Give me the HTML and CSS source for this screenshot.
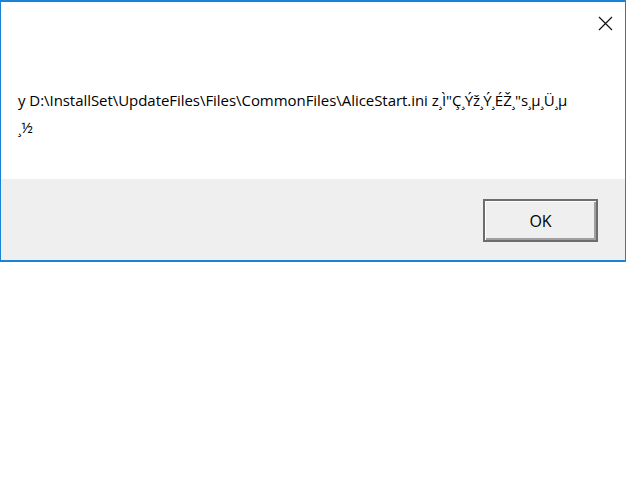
FILE: index.html
```html
<!DOCTYPE html>
<html>
<head>
<meta charset="utf-8">
<link rel="stylesheet" href="styles.css">
</head>
<body>
<div class="dialog">
  <div class="main">
    <div class="titlebar">
      <span class="close" aria-label="Close">
        <svg width="15" height="15" viewBox="0 0 15 15"><path d="M1 1 L14 14 M14 1 L1 14" stroke="#111" stroke-width="1.2" fill="none"/></svg>
      </span>
    </div>
    <p class="message">y D:\InstallSet\UpdateFiles\Files\CommonFiles\AliceStart.ini z¸Ì"Ç¸Ýž¸Ý¸ÉŽ¸"s¸µ¸Ü¸µ ¸½</p>
  </div>
  <div class="footer">
    <button class="ok">OK</button>
  </div>
</div>
</body>
</html>
```
FILE: styles.css
```css
html, body {
  margin: 0;
  padding: 0;
  background: #ffffff;
}
.dialog {
  width: 626px;
  box-sizing: border-box;
  border: 1px solid #1883d7;
  border-top-width: 2px;
  border-bottom-width: 2px;
  font-family: "Open Sans", "Noto Sans", sans-serif;
  color: #000;
}
.main {
  height: 177px;
  background: #fff;
}
.titlebar {
  display: flex;
  justify-content: flex-end;
  padding: 12px 12px 0 0;
  height: 20px;
}
.close {
  display: block;
  width: 15px;
  height: 15px;
}
.message {
  margin: 53px 0 0 17px;
  width: 560px;
  font-size: 15px;
  line-height: 27px;
  letter-spacing: -0.05px;
}
.footer {
  background: #efefef;
  height: 81px;
  display: flex;
  justify-content: flex-end;
  align-items: flex-start;
  padding: 20px 27px 0 0;
  box-sizing: border-box;
}
.ok {
  width: 115px;
  height: 43px;
  box-sizing: border-box;
  background: #efefef;
  border: 2px solid #6d6d6d;
  box-shadow: inset 1px 1px 0 #ffffff, inset -2px -2px 0 #a0a0a0;
  font-family: "Open Sans", "Noto Sans", sans-serif;
  font-size: 16px;
  color: #000;
  padding: 0;
}
```
